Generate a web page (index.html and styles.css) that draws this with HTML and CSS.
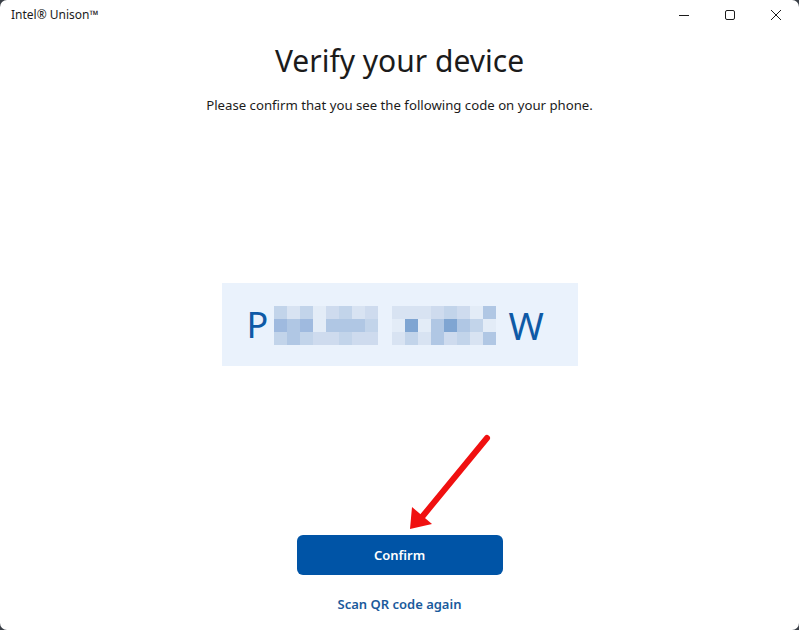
FILE: index.html
```html
<!DOCTYPE html>
<html lang="en">
<head>
    <meta charset="UTF-8">
    <meta name="viewport" content="width=device-width, initial-scale=1.0">
    <title>Intel® Unison™</title>
    <link rel="stylesheet" href="styles.css">
</head>
<body>
    <div class="window">
        <div class="titlebar">
            <span class="app-name">Intel® Unison™</span>
            <div class="controls">
                <button class="ctl" aria-label="Minimize">
                    <svg width="10" height="10" viewBox="0 0 10 10"><line x1="0" y1="5.5" x2="10" y2="5.5" stroke="#1b1b1b" stroke-width="1"/></svg>
                </button>
                <button class="ctl" aria-label="Maximize">
                    <svg width="10" height="10" viewBox="0 0 10 10"><rect x="0.5" y="0.5" width="9" height="9" rx="1.5" fill="none" stroke="#1b1b1b" stroke-width="1"/></svg>
                </button>
                <button class="ctl" aria-label="Close">
                    <svg width="10" height="10" viewBox="0 0 10 10"><path d="M0 0 L10 10 M10 0 L0 10" stroke="#1b1b1b" stroke-width="1"/></svg>
                </button>
            </div>
        </div>

        <main class="content">
            <h1>Verify your device</h1>
            <p class="hint">Please confirm that you see the following code on your phone.</p>

            <div class="code-box">
                <span class="letter">P</span>
                <div class="blur-group">
                    <i class="s3"></i><i class="s1"></i><i class="s3"></i><i class="s0"></i><i class="s2"></i><i class="s3"></i><i class="s1"></i><i class="s2"></i>
                    <i class="s5"></i><i class="s4"></i><i class="s5"></i><i class="s0"></i><i class="s4"></i><i class="s4"></i><i class="s4"></i><i class="s3"></i>
                    <i class="s3"></i><i class="s4"></i><i class="s3"></i><i class="s2"></i><i class="s2"></i><i class="s3"></i><i class="s2"></i><i class="s2"></i>
                </div>
                <div class="blur-group second">
                    <i class="s1"></i><i class="s1"></i><i class="s1"></i><i class="s2"></i><i class="s3"></i><i class="s2"></i><i class="s0"></i><i class="s4"></i>
                    <i class="s0"></i><i class="s6"></i><i class="s0"></i><i class="s4"></i><i class="s6"></i><i class="s4"></i><i class="s3"></i><i class="s0"></i>
                    <i class="s1"></i><i class="s3"></i><i class="s1"></i><i class="s4"></i><i class="s2"></i><i class="s3"></i><i class="s1"></i><i class="s4"></i>
                </div>
                <span class="letter last">W</span>
            </div>

            <button class="confirm">Confirm</button>
            <a class="rescan" href="#">Scan QR code again</a>
        </main>

        <!-- annotation arrow drawn over the screenshot -->
        <svg class="arrow" width="799" height="630" viewBox="0 0 799 630">
            <line x1="487" y1="438" x2="422" y2="517" stroke="#f01010" stroke-width="6" stroke-linecap="round"/>
            <polygon points="410,529 412,507 432,524" fill="#f01010"/>
        </svg>
    </div>
</body>
</html>
```

FILE: styles.css
```css
html, body {
    margin: 0;
    padding: 0;
    background-color: #3a3f47;
}
body {
    font-family: "Segoe UI", "Noto Sans", "Open Sans", sans-serif;
    color: #1b1b1b;
}
.window {
    position: relative;
    width: 799px;
    height: 630px;
    background-color: #fff;
    border-radius: 7px;
    overflow: hidden;
}
.titlebar {
    display: flex;
    justify-content: space-between;
    align-items: center;
    height: 30px;
}
.app-name {
    font-size: 12px;
    padding-left: 11px;
    padding-bottom: 1px;
}
.controls {
    display: flex;
    align-self: flex-start;
}
.ctl {
    width: 46px;
    height: 30px;
    border: none;
    background: none;
    padding: 0;
    display: flex;
    align-items: center;
    justify-content: center;
}
.content {
    display: flex;
    flex-direction: column;
    align-items: center;
}
h1 {
    margin: 13px 0 0;
    font-size: 30px;
    line-height: 36px;
    font-weight: 400;
    color: #1b1b1b;
}
.hint {
    margin: 16px 0 0;
    font-size: 13.2px;
    line-height: 20px;
}
.code-box {
    margin-top: 168px;
    width: 356px;
    height: 83px;
    box-sizing: border-box;
    padding-left: 25px;
    display: flex;
    align-items: center;
    background-color: #eaf2fc;
}
.letter {
    font-size: 36px;
    line-height: 40px;
    color: #0f5aa6;
    width: 27px;
}
.letter.last {
    margin-left: 13px;
    font-size: 38px;
}
.blur-group {
    display: grid;
    grid-template-columns: repeat(8, 13px);
    grid-template-rows: repeat(3, 13px);
    margin-top: 2px;
}
.blur-group.second {
    margin-left: 14px;
}
.blur-group i { display: block; }
.s0 { background-color: #e3ecf7; }
.s1 { background-color: #d8e3f2; }
.s2 { background-color: #cedbee; }
.s3 { background-color: #c2d4ea; }
.s4 { background-color: #b0c7e4; }
.s5 { background-color: #9fbadf; }
.s6 { background-color: #7fa5d2; }
.confirm {
    margin-top: 169px;
    width: 206px;
    height: 40px;
    border: none;
    border-radius: 6px;
    background-color: #0054a6;
    color: #fff;
    font-family: inherit;
    font-size: 13px;
    font-weight: 600;
    cursor: pointer;
}
.rescan {
    margin-top: 19px;
    font-size: 13px;
    line-height: 20px;
    font-weight: 600;
    color: #1a5a9c;
    text-decoration: none;
}
.arrow {
    position: absolute;
    top: 0;
    left: 0;
    pointer-events: none;
}
```
